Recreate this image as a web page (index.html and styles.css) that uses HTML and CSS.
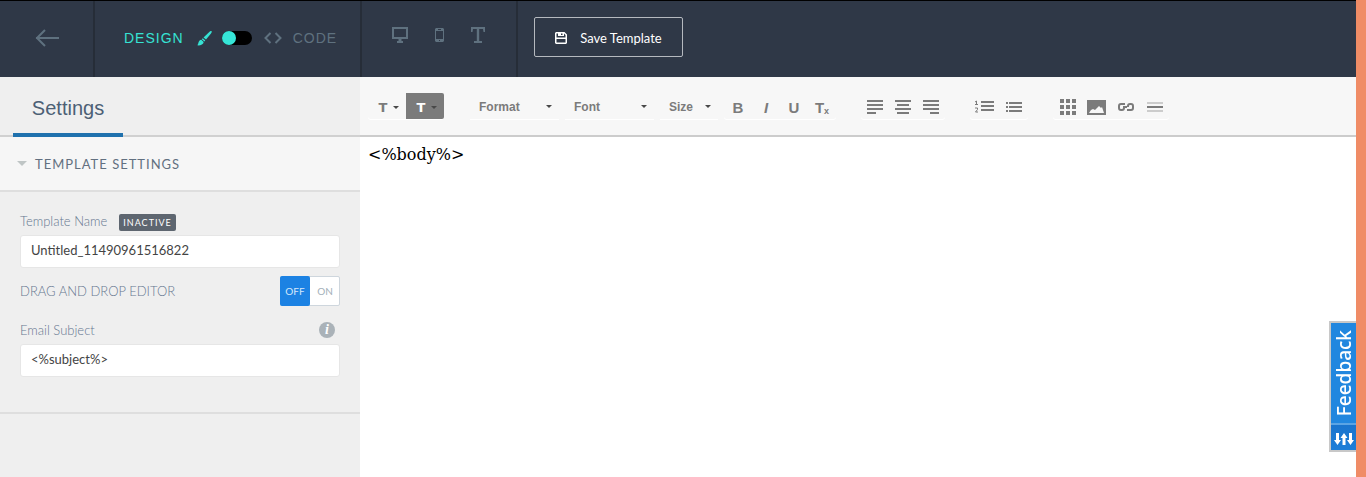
FILE: index.html
```html
<!DOCTYPE html>
<html lang="en">

<head>
  <meta charset="UTF-8">
  <meta name="viewport" content="width=device-width, initial-scale=1.0">
  <title>Template Editor</title>
  <link rel="stylesheet" href="styles.css">
</head>

<body>

  <header class="topbar">
    <a href="#" class="back" aria-label="Back">
      <svg width="24" height="18" viewBox="0 0 24 18" fill="none" stroke="currentColor" stroke-width="2"><path d="M10 1L2 9l8 8M1 9h23"/></svg>
    </a>

    <div class="mode">
      <label class="mode-name active" for="mode">DESIGN</label>
      <svg class="active" width="15" height="15" viewBox="0 0 15 15" fill="currentColor"><path d="M14.6.3c.5.5 0 1.500-.6 2.300L9 8.600 6.500 6.500 12.300.900C13 .2 14-.2 14.600.3zM5.800 7.200l2.500 2.200-.9 1-2.600-2.200zM4.200 8.800l2.500 2.100C6.500 13.500 3 14.800.2 14.300 1.900 13.300.9 9.300 4.200 8.800z"/></svg>
      <input type="checkbox" id="mode" class="switch">
      <svg class="code-icon" width="18" height="12" viewBox="0 0 18 12" fill="none" stroke="currentColor" stroke-width="2"><path d="M6.500 1l-5 5 5 5M11.500 1l5 5-5 5"/></svg>
      <label class="mode-name" for="mode">CODE</label>
    </div>

    <div class="devices">
      <button type="button" aria-label="Desktop view">
        <svg width="16" height="16" viewBox="0 0 16 16" fill="currentColor"><path fill-rule="evenodd" d="M0 0h16v12H9.500v2H11v2H5v-2h1.500v-2H0zM2 2v8h12V2z"/></svg>
      </button>
      <button type="button" aria-label="Mobile view">
        <svg width="9" height="14" viewBox="0 0 9 14" fill="currentColor"><path fill-rule="evenodd" d="M1 0h7l1 1v12l-1 1H1l-1-1V1zM1 3v8h7V3zM3 1v1h3V1zM4 12v1h1v-1z"/></svg>
      </button>
      <button type="button" aria-label="Text view">
        <svg width="14" height="16" viewBox="0 0 14 16" fill="currentColor"><path d="M0 0h14v5h-1.500l-.5-3H8.200v12H11v2H3v-2h2.800V2H2l-.5 3H0z"/></svg>
      </button>
    </div>

    <button type="button" class="save">
      <svg width="12" height="12" viewBox="0 0 12 12" fill="currentColor"><path fill-rule="evenodd" d="M1 0h8.500L12 2.500V11l-1 1H1l-1-1V1zM1.500 1.500v9h9V7h-9zM1.500 1.500V5.500h9V3L9 1.500V4H3V1.500zM6 1.500V3h1.500V1.500z"/></svg>
      Save Template
    </button>
  </header>

  <div class="workspace">
    <aside class="sidebar">
      <nav class="tabs">
        <a href="#settings" class="tab">Settings</a>
      </nav>

      <button type="button" class="section-title"><span class="triangle"></span>TEMPLATE SETTINGS</button>

      <form class="settings" id="settings">
        <div class="field-head">
          <label for="name">Template Name</label>
          <span class="badge">INACTIVE</span>
        </div>
        <input type="text" id="name" class="text-field" value="Untitled_11490961516822">

        <fieldset class="editor-mode">
          <legend class="hidden-label">Drag and drop</legend>
          <span>DRAG AND DROP EDITOR</span>
          <div class="off-on">
            <label><input type="radio" name="dnd" checked>OFF</label>
            <label><input type="radio" name="dnd">ON</label>
          </div>
        </fieldset>

        <div class="field-head subject-head">
          <label for="subject">Email Subject</label>
          <button type="button" class="info" aria-label="Info">i</button>
        </div>
        <input type="text" id="subject" class="text-field" value="&lt;%subject%&gt;">
      </form>
    </aside>

    <main class="editor">
      <div class="toolbar">
        <div class="group">
          <button type="button" class="color">T<span class="caret"></span></button>
          <button type="button" class="color filled">T<span class="caret"></span></button>
        </div>

        <div class="combos">
          <div class="combo"><select aria-label="Format"><option>Format</option></select></div>
          <div class="combo"><select aria-label="Font"><option>Font</option></select></div>
          <div class="combo small"><select aria-label="Size"><option>Size</option></select></div>
          <div class="group">
            <button type="button" class="tool">B</button>
            <button type="button" class="tool italic">I</button>
            <button type="button" class="tool">U</button>
            <button type="button" class="tool">T<sub>x</sub></button>
          </div>
        </div>

        <div class="group">
          <button type="button" class="tool" aria-label="Align left">
            <svg width="16" height="14" viewBox="0 0 16 14" fill="currentColor"><path d="M0 0h16v2H0zM0 4h16v2H0zM0 8h16v2H0zM0 12h9v2H0z"/></svg>
          </button>
          <button type="button" class="tool" aria-label="Align center">
            <svg width="16" height="14" viewBox="0 0 16 14" fill="currentColor"><path d="M0 0h16v2H0zM2 4h12v2H2zM0 8h16v2H0zM2 12h12v2H2z"/></svg>
          </button>
          <button type="button" class="tool" aria-label="Align right">
            <svg width="16" height="14" viewBox="0 0 16 14" fill="currentColor"><path d="M0 0h16v2H0zM0 4h16v2H0zM0 8h16v2H0zM7 12h9v2H7z"/></svg>
          </button>
        </div>

        <div class="group wide">
          <button type="button" class="tool" aria-label="Numbered list">
            <svg width="20" height="14" viewBox="0 0 20 14" fill="currentColor"><path d="M6 1h13v2H6zM6 5h13v2H6zM6 9h13v2H6z"/><path fill="none" stroke="currentColor" d="M0 2l1.500-1V4.500M0 4.500h3M0 8h2.500v1.500L.5 12H3"/></svg>
          </button>
          <button type="button" class="tool" aria-label="Bulleted list">
            <svg width="16" height="10" viewBox="0 0 16 10" fill="currentColor"><path d="M0 0h2v2H0zM3 0h13v2H3zM0 4h2v2H0zM3 4h13v2H3zM0 8h2v2H0zM3 8h13v2H3z"/></svg>
          </button>
        </div>

        <div class="group wide">
          <button type="button" class="tool" aria-label="Table">
            <svg width="16" height="16" viewBox="0 0 16 16" fill="currentColor"><path d="M0 0h4v4H0zM6 0h4v4H6zM12 0h4v4h-4zM0 6h4v4H0zM6 6h4v4H6zM12 6h4v4h-4zM0 12h4v4H0zM6 12h4v4H6zM12 12h4v4h-4z"/></svg>
          </button>
          <button type="button" class="tool" aria-label="Image">
            <svg width="19" height="15" viewBox="0 0 19 15"><path fill="currentColor" d="M0 0h19v15H0z"/><path fill="#f7f7f7" d="M2 13l2-3 2-1 2 1 4-4 2 2 1-1 2 6z"/></svg>
          </button>
          <button type="button" class="tool" aria-label="Link">
            <svg width="16" height="8" viewBox="0 0 16 8" fill="none" stroke="currentColor" stroke-width="2"><path d="M7 1H3Q1 1 1 3v2q0 2 2 2h1q2 0 2-2V4h3M9 7h4q2 0 2-2V3q0-2-2-2h-1q-2 0-2 2v1"/></svg>
          </button>
          <button type="button" class="tool" aria-label="Horizontal line">
            <svg width="16" height="10" viewBox="0 0 16 10"><path fill="#ccc" d="M0 0h16v2H0zM0 8h16v2H0z"/><path fill="currentColor" d="M0 4h16v2H0z"/></svg>
          </button>
        </div>
      </div>

      <div class="content" contenteditable="true" spellcheck="false">&lt;%body%&gt;</div>
    </main>
  </div>

  <button type="button" class="feedback">
    <span>Feedback</span>
    <svg width="20" height="12" viewBox="0 0 20 12" fill="#fff"><path d="M2 0h3v7h2l-3.500 5L0 7h2zM8.500 12h3V5h2L10 0 6.500 5h2zM15 0h3v7h2l-3.500 5L13 7h2z"/></svg>
  </button>

</body>

</html>
```

FILE: styles.css
```css
* {
  box-sizing: border-box;
}

body {
  margin: 0;
  min-height: 100vh;
  display: flex;
  flex-direction: column;
  border-right: 10px solid #f08c66;
  font-family: Lato, sans-serif;
  background: #fff;
}

button {
  border: none;
  padding: 0;
  margin: 0;
  background: none;
  color: inherit;
  font: inherit;
  cursor: pointer;
}

svg {
  display: block;
  flex: none;
}

/* Top bar */
.topbar {
  display: flex;
  height: 77px;
  border-top: 1px solid #000;
  background: #2f3847;
  color: #5f717f;
}

.back {
  width: 95px;
  display: flex;
  align-items: center;
  justify-content: center;
  border-right: 2px solid #262d38;
  color: inherit;
  padding-bottom: 2px;
}

.mode {
  width: 267px;
  display: flex;
  align-items: center;
  padding: 0 0 2px 29px;
  border-right: 2px solid #262d38;
}

.mode-name {
  font: 14px "Liberation Sans", sans-serif;
  letter-spacing: 1px;
}

.active {
  color: #36e2d3;
}

.mode svg.active {
  margin-left: 13px;
}

.switch {
  appearance: none;
  width: 30px;
  height: 14px;
  margin: 0 12px 0 10px;
  border-radius: 7px;
  background: #000;
}

.switch::before {
  content: "";
  display: block;
  width: 14px;
  height: 14px;
  border-radius: 50%;
  background: #36e6d8;
}

.switch:checked::before {
  margin-left: auto;
}

.code-icon {
  margin-right: 11px;
}

.devices {
  width: 156px;
  display: flex;
  align-items: center;
  justify-content: space-between;
  padding: 0 31px 8px 30px;
  border-right: 2px solid #262d38;
}

.save {
  display: flex;
  align-items: center;
  justify-content: center;
  gap: 13px;
  width: 149px;
  height: 40px;
  margin: 16px;
  padding-top: 2px;
  border: 1px solid #b5b9bf;
  border-radius: 2px;
  color: #fff;
  font-size: 13px;
}

/* Sidebar */
.workspace {
  flex: 1;
  display: flex;
}

.sidebar {
  width: 360px;
  flex: none;
  background: #efefef;
  color: #66778f;
}

.tabs {
  height: 60px;
  padding-left: 13px;
  border-bottom: 2px solid #d0d0d0;
}

.tab {
  display: block;
  width: 110px;
  height: 60px;
  padding-top: 20px;
  border-bottom: 4px solid #1f71ad;
  color: #4c6075;
  font: 20px "Liberation Sans", sans-serif;
  text-align: center;
  text-decoration: none;
}

.section-title {
  display: flex;
  align-items: center;
  gap: 8px;
  width: 100%;
  height: 55px;
  padding-left: 17px;
  border-bottom: 2px solid #dedede;
  background: #f6f6f6;
  color: #627080;
  font-size: 13px;
  letter-spacing: 1px;
}

.triangle {
  border: 5px solid transparent;
  border-top: 5px solid #bfc5c5;
  border-bottom: none;
}

.settings {
  padding: 20px 20px 35px;
  border-bottom: 2px solid #dedede;
  font-size: 13px;
  font-weight: 300;
}

.field-head {
  display: flex;
  align-items: center;
  height: 17px;
  margin-bottom: 6px;
}

.badge {
  margin: 3px 0 0 12px;
  padding: 0 4px;
  border-radius: 2px;
  background: #5e6670;
  color: #fff;
  font-size: 9px;
  font-weight: 400;
  line-height: 17px;
  letter-spacing: 1px;
}

.text-field {
  display: block;
  width: 100%;
  height: 33px;
  padding: 0 10px 3px;
  border: 1px solid #e6e6e6;
  border-radius: 3px;
  background: #fff;
  color: #444;
  font: 13px Lato, sans-serif;
}

.editor-mode {
  display: flex;
  align-items: center;
  justify-content: space-between;
  margin: 8px 0 15px;
  padding: 0;
  border: none;
}

.hidden-label,
.off-on input {
  position: absolute;
  opacity: 0;
}

.off-on {
  display: flex;
  height: 30px;
  border: 1px solid #ced6dd;
  border-radius: 2px;
  background: #fff;
  color: #a3afb9;
  font-size: 10px;
  font-weight: 400;
}

.off-on label {
  width: 30px;
  margin: -1px;
  line-height: 31px;
  text-align: center;
}

.off-on label + label {
  margin: -1px -1px -1px 1px;
}

.off-on label:has(:checked) {
  border-radius: 2px;
  background: #1c82e3;
  color: #d5e8fb;
}

.subject-head {
  justify-content: space-between;
  padding-right: 5px;
}

.info {
  width: 16px;
  height: 16px;
  border-radius: 50%;
  background: #aab2b8;
  color: #fff;
  font: italic bold 14px/16px "Liberation Serif", serif;
}

/* Editor */
.editor {
  flex: 1;
  min-width: 0;
}

.toolbar {
  display: flex;
  align-items: center;
  gap: 25px;
  height: 60px;
  padding: 0 8px;
  border-bottom: 2px solid #ccc;
  background: #f7f7f7;
  color: #7b7b7b;
}

.group {
  display: flex;
  border-radius: 3px;
  box-shadow: 0 1px 0 #fff;
}

.color {
  display: flex;
  align-items: center;
  justify-content: center;
  gap: 6px;
  width: 38px;
  height: 26px;
  padding: 2px 0 0 4px;
  font: bold 13px "DejaVu Sans", sans-serif;
}

.filled {
  border-radius: 0 2px 2px 0;
  background: #7b7b7b;
  color: #fff;
}

.caret,
.combo::after {
  content: "";
  border: 3px solid transparent;
  border-top-color: #484848;
  border-bottom: none;
}

.combos {
  display: flex;
  gap: 6px;
  padding-left: 1px;
}

.combo {
  display: grid;
  align-items: center;
  width: 89px;
  height: 26px;
  box-shadow: 0 1px 0 #fff;
}

.combo.small {
  width: 58px;
}

.combo select,
.combo::after {
  grid-area: 1 / 1;
}

.combo::after {
  justify-self: end;
  margin-right: 7px;
  pointer-events: none;
}

.combo select {
  appearance: none;
  width: 100%;
  height: 26px;
  padding: 2px 9px 0;
  border: none;
  background: none;
  color: inherit;
  font: bold 12px "Liberation Sans", sans-serif;
}

.tool {
  display: flex;
  align-items: center;
  justify-content: center;
  width: 28px;
  height: 26px;
  padding-top: 2px;
  font: bold 15px "Liberation Sans", sans-serif;
}

.tool sub {
  align-self: end;
  font-size: 9px;
  line-height: 16px;
}

.wide .tool {
  width: 29px;
}

.italic {
  font-style: italic;
}

.content {
  padding: 8px;
  outline: none;
  color: #000;
  font: 16px "DejaVu Serif", serif;
}

/* Feedback tab, over the page edge */
.feedback {
  position: fixed;
  top: 321px;
  right: 10px;
  width: 27px;
  height: 131px;
  display: flex;
  flex-direction: column;
  align-items: center;
  justify-content: space-between;
  padding: 7px 0 5px;
  border: 2px solid #c8c8c8;
  border-right: none;
  background: linear-gradient(#2187df 79%, #5ba4e4 79%, #5ba4e4 80%, #1a74cd 80%, #1d7ed8);
  color: #fff;
}

.feedback span {
  writing-mode: vertical-rl;
  transform: rotate(180deg);
  font: 500 19px/24px "Noto Sans", sans-serif;
}
```
